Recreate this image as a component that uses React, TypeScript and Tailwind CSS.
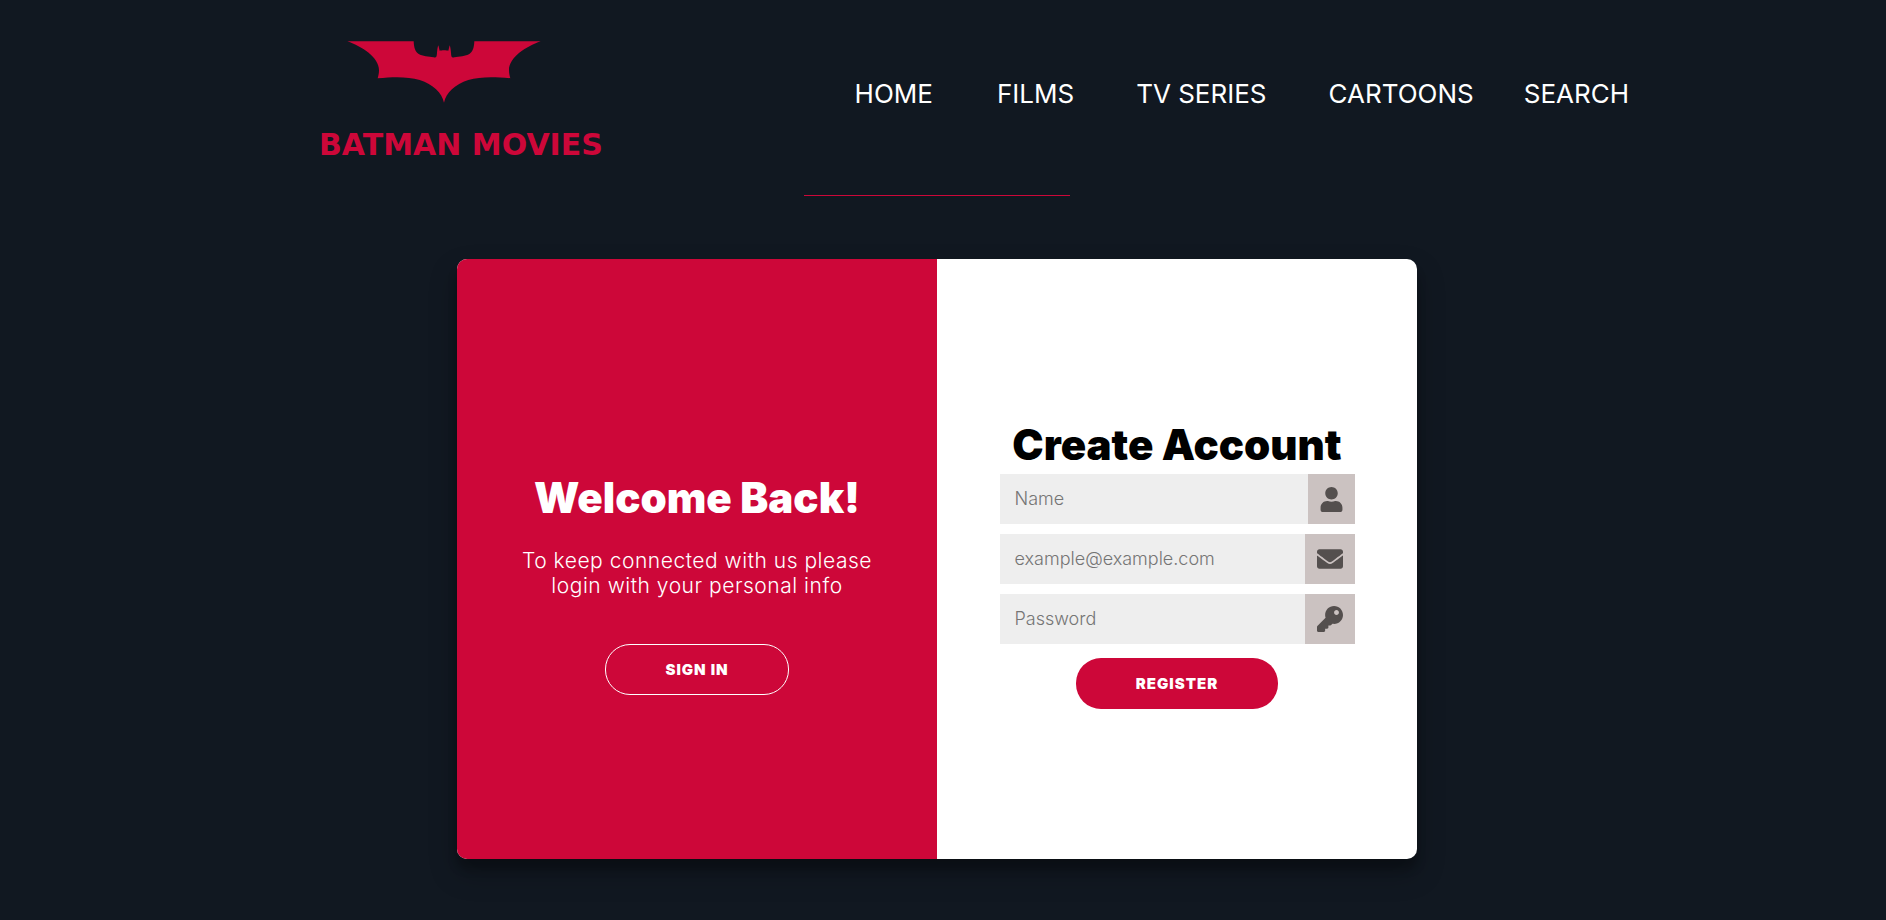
import type { ComponentType, InputHTMLAttributes } from 'react';
import { FaEnvelope, FaKey, FaUser } from 'react-icons/fa';

const navItems = [
  { label: 'HOME', gap: '' },
  { label: 'FILMS', gap: 'ml-16' },
  { label: 'TV SERIES', gap: 'ml-[62px]' },
  { label: 'CARTOONS', gap: 'ml-[62px]' },
  { label: 'SEARCH', gap: 'ml-[50px]' },
];

function BatLogo() {
  return (
    <svg className="ml-7 h-[62px] w-[194px]" viewBox="21 17 582 186" fill="#cd0739" aria-hidden="true">
      <path d="M22 18H221C222 38 226 50 236 56C246 62 268 64 280 66C290 67 290 64 291 52C292 42 293 34 295 30L299 46C304 44 320 44 325 46L329 30C331 34 332 42 333 52C334 64 334 67 344 66C356 64 378 62 388 56C398 50 402 38 403 18H602C558 34 507 66 507 105C507 114 509 122 511 129C460 124 420 124 385 134C345 147 318 172 312 202C306 172 279 147 239 134C204 124 164 124 113 129C115 122 117 114 117 105C117 66 66 34 22 18Z" />
    </svg>
  );
}

type FieldProps = InputHTMLAttributes<HTMLInputElement> & {
  icon: ComponentType<{ className?: string }>;
  iconClass: string;
};

function Field({ icon: Icon, iconClass, ...input }: FieldProps) {
  return (
    <div className="flex h-[50px]">
      <input
        {...input}
        aria-label={input.placeholder}
        className="min-w-0 flex-1 bg-[#eeeeee] px-[15px] text-lg font-light text-black outline-none placeholder:text-[#757575]"
      />
      <span className="flex items-center bg-[#cbc2c1] px-3 text-[#544f4e]">
        <Icon className={iconClass} />
      </span>
    </div>
  );
}

export default function App() {
  return (
    <div className="min-h-screen bg-[#111821] pr-3 font-['Inter','Open_Sans',sans-serif]">
      <header className="mx-auto flex max-w-[1384px] justify-between pt-[41px] pl-[74px]">
        <a href="#home" className="block">
          <BatLogo />
          <span className="mt-[26px] block font-['DejaVu_Sans',sans-serif] text-3xl leading-8 font-bold text-[#cd0739]">
            BATMAN MOVIES
          </span>
        </a>
        <nav className="flex items-center self-start pt-[35px] text-[26px] leading-9 text-white">
          {navItems.map((item) => (
            <a key={item.label} href="#" className={item.gap}>
              {item.label}
            </a>
          ))}
        </nav>
      </header>

      <hr className="mx-auto mt-[34px] h-px w-[266px] border-0 bg-[#cd0739]" />

      <main className="mx-auto mt-[63px] flex min-h-[600px] max-w-[960px] overflow-hidden rounded-[10px] bg-white shadow-[0_14px_28px_rgba(0,0,0,0.25),0_10px_10px_rgba(0,0,0,0.22)]">
        <section className="flex w-1/2 flex-col items-center justify-center bg-[#cd0739] px-10 pt-[50px] text-center text-white">
          <h1 className="text-[42px] leading-12 font-black">Welcome Back!</h1>
          <p className="mt-[26px] text-[21px] leading-[25px] font-light tracking-wide">
            To keep connected with us please
            <br />
            login with your personal info
          </p>
          <button
            type="button"
            className="mt-[46px] h-[51px] w-[184px] rounded-[25px] border border-white pt-0.5 text-[15px] font-black tracking-[1px]"
          >
            SIGN IN
          </button>
        </section>

        <section className="flex w-1/2 flex-col items-center justify-center pt-3">
          <h1 className="text-[42px] leading-12 font-black text-black">Create Account</h1>
          <form className="mt-[5px] flex w-[355px] flex-col gap-2.5">
            <Field type="text" placeholder="Name" icon={FaUser} iconClass="h-[25px] w-[23px]" />
            <Field type="email" placeholder="example@example.com" icon={FaEnvelope} iconClass="size-[26px]" />
            <Field type="password" placeholder="Password" icon={FaKey} iconClass="size-[26px]" />
            <button
              type="submit"
              className="mt-1 h-[51px] w-[202px] self-center rounded-[25px] bg-[#cd0739] pt-0.5 text-[15px] font-black tracking-[1px] text-white"
            >
              REGISTER
            </button>
          </form>
        </section>
      </main>
    </div>
  );
}
